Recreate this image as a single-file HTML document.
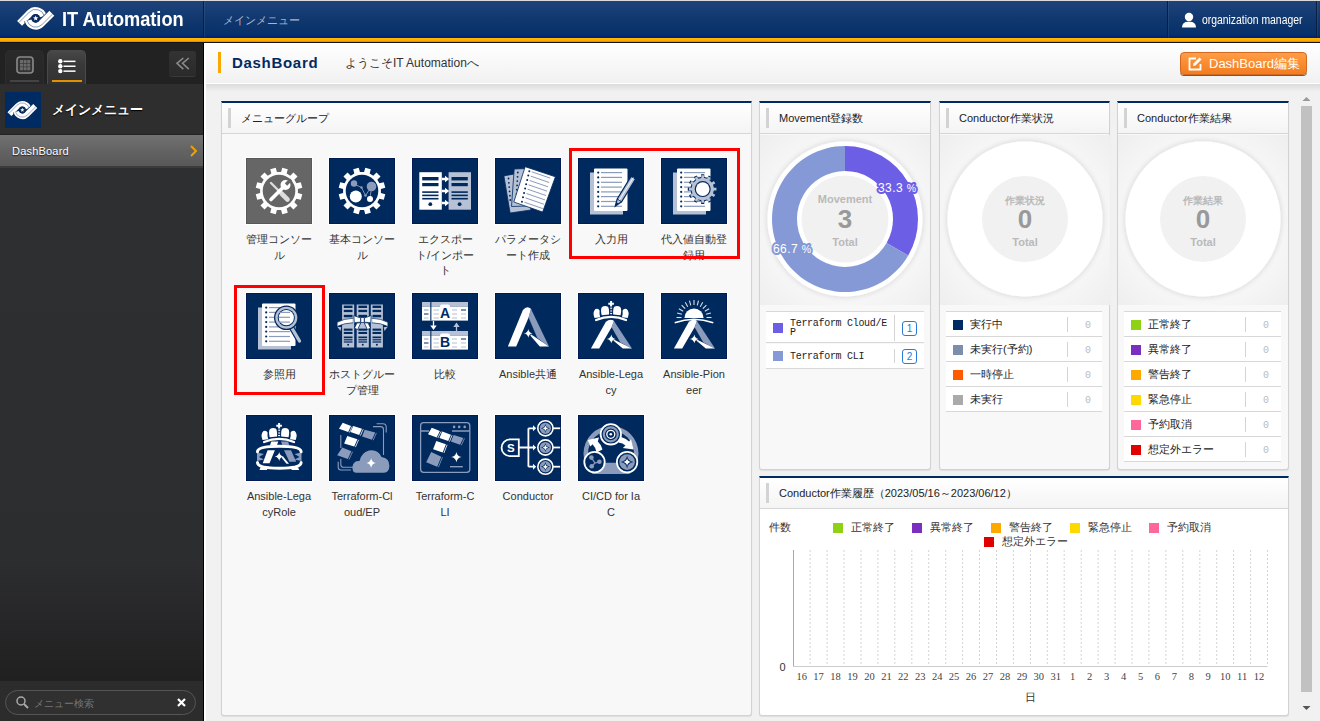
<!DOCTYPE html>
<html><head><meta charset="utf-8">
<style>
*{box-sizing:border-box;margin:0;padding:0}
html,body{width:1320px;height:721px;overflow:hidden;background:#f1f1f1;font-family:"Liberation Sans",sans-serif;color:#333}
svg{display:block}
/* header */
#hd{position:absolute;left:0;top:0;width:1320px;height:43px;background:#d9d9d9}
#hdb{position:absolute;left:0;top:1px;width:1320px;height:37px;background:linear-gradient(#1e437b,#12396f 45%,#06306a 92%,#00237a 97%,#001f72)}
#hdo{position:absolute;left:0;top:38px;width:1320px;height:4px;background:linear-gradient(#ffba00,#ffa900 60%,#d08a00)}
#hdk{position:absolute;left:0;top:42px;width:1320px;height:1px;background:#141414}
.vdiv{position:absolute;top:1px;height:37px;width:1px;background:#0a1e42;box-shadow:1px 0 0 rgba(255,255,255,.07)}
#logo{position:absolute;left:14px;top:2px}
#logo-t{position:absolute;left:62px;top:8px;font-size:20px;font-weight:bold;color:#fff;transform:scaleX(.91);transform-origin:left top;white-space:nowrap}
#crumb{position:absolute;left:223px;top:13px;font-size:11px;color:#a9b5cb}
#user{position:absolute;left:1202px;top:13px;font-size:12px;color:#fff;transform:scaleX(.865);transform-origin:left top;white-space:nowrap}
#uic{position:absolute;left:1181px;top:12px}
/* sidebar */
#sb{position:absolute;left:0;top:43px;width:203px;height:678px;background:linear-gradient(#222 0,#222 41px,#2e2f31 125px,#2c2d2f 520px,#202020 638px)}
#sbk{position:absolute;left:203px;top:43px;width:1px;height:678px;background:#000}
#sbw{position:absolute;left:204px;top:43px;width:2px;height:678px;background:#fff}
.tab{position:absolute;top:50px;height:34px;width:39px;border-radius:5px 5px 0 0;border:1px solid #2c2c2c;border-bottom:none}
#tab1{left:5px;background:linear-gradient(#2a2a2a,#262626)}
#tab2{left:47px;background:linear-gradient(#484848,#393939 40%,#323232);border-color:#4a4a4a}
#menuhd{position:absolute;left:0;top:84px;width:203px;height:50px;background:#2e2e2e}
#menuhd .lg{position:absolute;left:5px;top:8px;width:36px;height:36px;background:#002b62}
#menuhd .lg svg{position:absolute;left:0;top:5px}
#menuhd .t{position:absolute;left:52px;top:17px;font-size:13px;font-weight:bold;color:#fff;text-shadow:0 1px 1px #000;white-space:nowrap}
#sbline{position:absolute;left:0;top:134px;width:203px;height:1px;background:#232323}
#dash{position:absolute;left:0;top:135px;width:203px;height:31px;background:linear-gradient(#727272,#636363 50%,#585858)}
#dash2{position:absolute;left:0;top:166px;width:203px;height:2px;background:#3c3c3c}
#dash .t{position:absolute;left:12px;top:10px;font-size:11px;letter-spacing:.2px;color:#fff;text-shadow:0 1px 1px #222}
#srch{position:absolute;left:0;top:681px;width:203px;height:40px;background:#2c2c2c}
#srch .box{position:absolute;left:5px;top:9px;width:191px;height:25px;border:1px solid #555;border-radius:13px;background:#303030}
#srch .ph{position:absolute;left:28px;top:6px;font-size:10px;color:#777}
/* content title */
#ttl{position:absolute;left:206px;top:43px;width:1114px;height:41px;background:linear-gradient(#fff,#f1f1f1);border-bottom:1px solid #fff}
#ttlsh{position:absolute;left:206px;top:84px;width:1114px;height:8px;background:linear-gradient(rgba(0,0,0,.085),rgba(0,0,0,0))}
#ttl .bar{position:absolute;left:12px;top:9px;width:3px;height:21px;background:#f9a800}
#ttl .h{position:absolute;left:26px;top:11px;font-size:15px;font-weight:bold;color:#002b62;letter-spacing:.7px}
#ttl .s{position:absolute;left:139px;top:12px;font-size:12px;color:#333}
#edit{position:absolute;left:1180px;top:52px;width:127px;height:23px;border-radius:4px;background:linear-gradient(#ff9d48,#f98a2e 55%,#f27d20);border:1px solid #d06a22;box-shadow:0 1px 0 #9b4d18}
#edit .t{position:absolute;left:28px;top:2px;font-size:13px;color:#fff;white-space:nowrap}
#edit svg{position:absolute;left:6px;top:3px}
/* panels */
.pn{position:absolute;border:1px solid #d2d2d2;border-top:2px solid #002b62;border-radius:0 0 3px 3px;background:#f8f8f8;box-shadow:0 1px 1px rgba(0,0,0,.08)}
.pn .ph{position:absolute;left:0;top:0;right:0;height:31px;background:linear-gradient(#fff,#f4f4f4);border-bottom:1px solid #d6d6d6}
.pn .ph .bar{position:absolute;left:6px;top:5px;width:3px;height:20px;background:#d3d3d3}
.pn .ph .t{position:absolute;left:19px;top:8px;font-size:11px;color:#222;white-space:nowrap}
.mi{position:absolute;width:66px;height:66px;box-shadow:0 0 0 1px #fff}
.ml{position:absolute;left:-10px;top:74px;width:86px;text-align:center;font-size:11px;line-height:15.5px;color:#333;white-space:nowrap}
.red{position:absolute;border:3px solid #f00}
/* donut panels */
.ca{position:absolute;left:0;top:32px;width:170px;height:170px;background:radial-gradient(circle at 50% 50%,#f8f8f8 60%,#eeeeee 100%)}
.ct{position:absolute;text-align:center;width:100px;color:#b9b9b9;font-weight:bold;font-size:11px;white-space:nowrap}
.cn{position:absolute;text-align:center;width:100px;color:#999;font-weight:bold;font-size:26px}
.pct{position:absolute;font-size:12px;color:#fff;font-weight:normal;white-space:nowrap}
/* legend tables */
.lt{position:absolute;border-top:1px solid #d8d8d8}
.lr{position:relative;height:25px;background:#fff;border-bottom:1px solid #d8d8d8}
.sq{position:absolute;left:7px;top:8px;width:10px;height:10px}
.lx{position:absolute;left:24px;top:5px;font-size:11px;color:#222;white-space:nowrap}
.sep{position:absolute;left:121px;top:5px;width:1px;height:15px;background:#d4d4d4}
.zr{position:absolute;left:139px;top:8px;font-family:"Liberation Mono",monospace;font-size:10px;color:#bbb}
.mv{position:absolute;background:#fff;border-bottom:1px solid #d8d8d8}
.mvx{position:absolute;left:24px;font-family:"Liberation Mono",monospace;font-size:10px;line-height:9px;color:#222;letter-spacing:-.3px}
.bdg{position:absolute;left:136px;width:15px;height:15px;border:1px solid #2a7ad6;border-radius:3px;color:#2a7ad6;font-size:10px;text-align:center;line-height:13px}
/* scrollbar */
#scr{position:absolute;left:1299px;top:92px;width:15px;height:629px;background:#f1f1f1}
#thumb{position:absolute;left:1301px;top:106px;width:11px;height:586px;background:#c1c1c1}
.chlbl{font-family:"Liberation Serif",serif;font-size:10.5px;fill:#444}
</style></head><body>
<svg width="0" height="0" style="position:absolute"><defs><filter id="sh" x="-20%" y="-20%" width="140%" height="140%"><feGaussianBlur in="SourceAlpha" stdDeviation="3"/><feOffset dy="0"/><feComponentTransfer><feFuncA type="linear" slope=".16"/></feComponentTransfer><feMerge><feMergeNode/><feMergeNode in="SourceGraphic"/></feMerge></filter></defs></svg>
<div id="hd"></div><div id="hdb"></div><div id="hdo"></div><div id="hdk"></div>
<div class="vdiv" style="left:203px"></div>
<div class="vdiv" style="left:1167px"></div>
<div class="vdiv" style="left:1316px"></div>
<div id="logo"><svg width="44.0" height="34.0" viewBox="0 0 44 34">
<path d="M5.58,21.39 L16.18,10.78 A7.8,7.8 0 0 1 29.23,14.28" stroke="#fff" stroke-width="7" fill="none"/>
<path d="M4.80,20.61 L15.41,10.01 A8.9,8.9 0 0 1 30.30,14.00" stroke="#3a5688" stroke-width=".6" fill="none"/>
<path d="M37.82,11.21 L27.22,21.82 A7.8,7.8 0 0 1 14.17,18.32" stroke="#0c2a5e" stroke-width="8.4" fill="none"/>
<path d="M37.82,11.21 L27.22,21.82 A7.8,7.8 0 0 1 14.17,18.32" stroke="#fff" stroke-width="7" fill="none"/>
<path d="M38.60,11.99 L27.99,22.59 A8.9,8.9 0 0 1 13.10,18.60" stroke="#3a5688" stroke-width=".6" fill="none"/>
<circle cx="21.700000000000003" cy="16.3" r="4.3" fill="#0c2a5e"/>
<path d="M21.70,13.50 L22.38,15.37 L24.36,15.43 L22.79,16.66 L23.35,18.57 L21.70,17.45 L20.05,18.57 L20.61,16.66 L19.04,15.43 L21.02,15.37Z" fill="#fff"/>
</svg></div>
<div id="logo-t">IT Automation</div>
<div id="crumb">メインメニュー</div>
<div id="uic"><svg width="16" height="16" viewBox="0 0 16 16"><circle cx="8" cy="5" r="4.2" fill="#fff"/><path d="M1,15.5 Q1,9.5 8,9.8 Q15,9.5 15,15.5 Z" fill="#fff"/></svg></div>
<div id="user">organization manager</div>

<div id="sb"></div><div id="sbk"></div><div id="sbw"></div>
<div class="tab" id="tab1"><svg style="position:absolute;left:10px;top:5px" width="18" height="18" viewBox="0 0 18 18"><rect x="1" y="1" width="16" height="16" rx="3" stroke="#8a8a8a" stroke-width="1.6" fill="#333"/><g fill="#6a6a6a"><rect x="4" y="4" width="3" height="3"/><rect x="7.6" y="4" width="3" height="3"/><rect x="11.2" y="4" width="3" height="3"/><rect x="4" y="7.6" width="3" height="3"/><rect x="7.6" y="7.6" width="3" height="3"/><rect x="11.2" y="7.6" width="3" height="3"/><rect x="4" y="11.2" width="3" height="3"/><rect x="7.6" y="11.2" width="3" height="3"/><rect x="11.2" y="11.2" width="3" height="3"/></g></svg><div style="position:absolute;left:4px;top:29px;width:29px;height:2px;background:#444"></div></div>
<div class="tab" id="tab2"><svg style="position:absolute;left:9px;top:7px" width="20" height="16" viewBox="0 0 20 16"><g fill="#fff"><circle cx="3.3" cy="3.3" r="2.2"/><circle cx="3.3" cy="8.2" r="2.2"/><circle cx="3.3" cy="13.1" r="2.2"/><rect x="6.5" y="2.6" width="12" height="1.5"/><rect x="6.5" y="7.5" width="12" height="1.5"/><rect x="6.5" y="12.4" width="12" height="1.5"/></g></svg><div style="position:absolute;left:4px;top:29px;width:30px;height:2px;background:#e09000"></div></div>
<div style="position:absolute;left:169px;top:51px;width:27px;height:26px;border-radius:3px;background:linear-gradient(#333,#2a2a2a);border-bottom:1px solid #3a3a3a"><svg width="27" height="26" viewBox="0 0 27 26"><path d="M14.3,7 L8,12.3 L14.3,18.2 M19.8,7 L13.5,12.3 L19.8,18.2" stroke="#8a8a8a" stroke-width="1.6" fill="none"/></svg></div>
<div id="menuhd"><div class="lg"><svg width="35.2" height="27.2" viewBox="0 0 44 34">
<path d="M5.58,21.39 L16.18,10.78 A7.8,7.8 0 0 1 29.23,14.28" stroke="#fff" stroke-width="7" fill="none"/>
<path d="M4.80,20.61 L15.41,10.01 A8.9,8.9 0 0 1 30.30,14.00" stroke="#3a5688" stroke-width=".6" fill="none"/>
<path d="M37.82,11.21 L27.22,21.82 A7.8,7.8 0 0 1 14.17,18.32" stroke="#0c2a5e" stroke-width="8.4" fill="none"/>
<path d="M37.82,11.21 L27.22,21.82 A7.8,7.8 0 0 1 14.17,18.32" stroke="#fff" stroke-width="7" fill="none"/>
<path d="M38.60,11.99 L27.99,22.59 A8.9,8.9 0 0 1 13.10,18.60" stroke="#3a5688" stroke-width=".6" fill="none"/>
<circle cx="21.700000000000003" cy="16.3" r="4.3" fill="#0c2a5e"/>
<path d="M21.70,13.50 L22.38,15.37 L24.36,15.43 L22.79,16.66 L23.35,18.57 L21.70,17.45 L20.05,18.57 L20.61,16.66 L19.04,15.43 L21.02,15.37Z" fill="#fff"/>
</svg></div><div class="t">メインメニュー</div></div>
<div id="sbline"></div>
<div id="dash"><div class="t">DashBoard</div><svg style="position:absolute;left:189px;top:9px" width="10" height="14" viewBox="0 0 10 14"><path d="M2,2 L7,7 L2,12" stroke="#f0a000" stroke-width="2" fill="none"/></svg></div><div id="dash2"></div>
<div id="srch"><div class="box"><svg style="position:absolute;left:9px;top:4px" width="15" height="15" viewBox="0 0 15 15"><circle cx="6" cy="6" r="4" stroke="#aaa" stroke-width="1.5" fill="none"/><path d="M9,9 L13,13" stroke="#aaa" stroke-width="2"/></svg><div class="ph">メニュー検索</div><svg style="position:absolute;left:170px;top:6px" width="11" height="11" viewBox="0 0 11 11"><path d="M2,2 L9,9 M9,2 L2,9" stroke="#fff" stroke-width="2.2"/></svg></div></div>

<div id="ttl"><div class="bar"></div><div class="h">DashBoard</div><div class="s">ようこそIT Automationへ</div></div>
<div id="ttlsh"></div>
<div id="edit"><svg width="16" height="16" viewBox="0 0 16 16"><path d="M9,2.5 L2.5,2.5 L2.5,13.5 L13.5,13.5 L13.5,8" stroke="#fff" stroke-width="1.8" fill="none"/><path d="M6,10 L6.5,7.5 L12.5,1.5 L14.5,3.5 L8.5,9.5 Z" fill="#fff"/></svg><div class="t">DashBoard編集</div></div>

<div class="pn" style="left:221px;top:101px;width:531px;height:615px"><div class="ph"><div class="bar"></div><div class="t">メニューグループ</div></div></div>
<div class="mi" style="left:246px;top:158px"><svg width="66" height="66" viewBox="0 0 66 66"><rect width="66" height="66" fill="#666"/><path d="M51.89,35.07 L56.27,36.27 L54.79,41.80 L50.39,40.65 L48.32,44.23 L51.52,47.47 L47.47,51.52 L44.23,48.32 L40.65,50.39 L41.80,54.79 L36.27,56.27 L35.07,51.89 L30.93,51.89 L29.73,56.27 L24.20,54.79 L25.35,50.39 L21.77,48.32 L18.53,51.52 L14.48,47.47 L17.68,44.23 L15.61,40.65 L11.21,41.80 L9.73,36.27 L14.11,35.07 L14.11,30.93 L9.73,29.73 L11.21,24.20 L15.61,25.35 L17.68,21.77 L14.48,18.53 L18.53,14.48 L21.77,17.68 L25.35,15.61 L24.20,11.21 L29.73,9.73 L30.93,14.11 L35.07,14.11 L36.27,9.73 L41.80,11.21 L40.65,15.61 L44.23,17.68 L47.47,14.48 L51.52,18.53 L48.32,21.77 L50.39,25.35 L54.79,24.20 L56.27,29.73 L51.89,30.93Z" fill="#fff"/><circle cx="33" cy="33" r="16.3" fill="#666"/><path d="M25,25 L33,33" stroke="#ddd" stroke-width="2.4" stroke-linecap="round"/><path d="M35.5,35.5 L41.5,41.5" stroke="#ddd" stroke-width="4.6" stroke-linecap="round"/><path d="M25,41.5 L37,29.5" stroke="#fff" stroke-width="3.6" stroke-linecap="round"/><circle cx="39.5" cy="27" r="5" fill="#fff"/><path d="M40,26.5 L45,21.5" stroke="#666" stroke-width="3.2"/><rect x=".5" y=".5" width="65" height="65" fill="none" stroke="#555" stroke-width="1" opacity=".8"/></svg><div class="ml">管理コンソー<br>ル</div></div>
<div class="mi" style="left:329px;top:158px"><svg width="66" height="66" viewBox="0 0 66 66"><rect width="66" height="66" fill="#00295e"/><path d="M51.89,35.07 L56.27,36.27 L54.79,41.80 L50.39,40.65 L48.32,44.23 L51.52,47.47 L47.47,51.52 L44.23,48.32 L40.65,50.39 L41.80,54.79 L36.27,56.27 L35.07,51.89 L30.93,51.89 L29.73,56.27 L24.20,54.79 L25.35,50.39 L21.77,48.32 L18.53,51.52 L14.48,47.47 L17.68,44.23 L15.61,40.65 L11.21,41.80 L9.73,36.27 L14.11,35.07 L14.11,30.93 L9.73,29.73 L11.21,24.20 L15.61,25.35 L17.68,21.77 L14.48,18.53 L18.53,14.48 L21.77,17.68 L25.35,15.61 L24.20,11.21 L29.73,9.73 L30.93,14.11 L35.07,14.11 L36.27,9.73 L41.80,11.21 L40.65,15.61 L44.23,17.68 L47.47,14.48 L51.52,18.53 L48.32,21.77 L50.39,25.35 L54.79,24.20 L56.27,29.73 L51.89,30.93Z" fill="#fff"/><circle cx="33" cy="33" r="16.3" fill="#00295e"/><path d="M25,26 L32.5,29.5 L36.5,37.5 L42.5,28.5 L41,41" stroke="#8a9bbb" stroke-width=".9" fill="none"/><circle cx="25" cy="25.5" r="3.2" fill="#8a9bbb"/><circle cx="42.5" cy="28.5" r="4.8" fill="#8a9bbb"/><circle cx="32.5" cy="29.5" r="1.2" fill="#8a9bbb"/><circle cx="36.5" cy="37.5" r="1.3" fill="#8a9bbb"/><circle cx="26.8" cy="38.5" r="6" fill="#fff"/><circle cx="41" cy="41" r="3" fill="#fff"/><rect x=".5" y=".5" width="65" height="65" fill="none" stroke="#001650" stroke-width="1" opacity=".8"/></svg><div class="ml">基本コンソー<br>ル</div></div>
<div class="mi" style="left:412px;top:158px"><svg width="66" height="66" viewBox="0 0 66 66"><rect width="66" height="66" fill="#00295e"/><rect x="7.3" y="14.2" width="22.5" height="37.5" fill="#fff"/><rect x="36.6" y="14.2" width="22.4" height="37.5" fill="#b6c1d5"/><rect x="10.2" y="19" width="16.3" height="3.4" fill="#00295e"/><rect x="10.2" y="25" width="16.3" height="3.2" fill="#00295e"/><rect x="10.2" y="33.3" width="16.3" height="1.6" fill="#00295e"/><rect x="10.2" y="36.6" width="16.3" height="1.6" fill="#00295e"/><rect x="10.2" y="39.9" width="16.3" height="1.6" fill="#00295e"/><circle cx="18.299999999999997" cy="46.2" r="1.9" fill="#00295e"/><rect x="39.5" y="19" width="16.3" height="3.4" fill="#00295e"/><rect x="39.5" y="25" width="16.3" height="3.2" fill="#00295e"/><rect x="39.5" y="33.3" width="16.3" height="1.6" fill="#00295e"/><rect x="39.5" y="36.6" width="16.3" height="1.6" fill="#00295e"/><rect x="39.5" y="39.9" width="16.3" height="1.6" fill="#00295e"/><circle cx="47.6" cy="46.2" r="1.9" fill="#00295e"/><path d="M29.8,19.8 L33,19.8 L33,17.8 L37.2,21 L33,24.2 L33,22.2 L29.8,22.2Z" fill="#fff"/><path d="M29.8,31.8 L33,31.8 L33,29.8 L37.2,33 L33,36.2 L33,34.2 L29.8,34.2Z" fill="#fff"/><path d="M29.8,43.8 L33,43.8 L33,41.8 L37.2,45 L33,48.2 L33,46.2 L29.8,46.2Z" fill="#fff"/><rect x=".5" y=".5" width="65" height="65" fill="none" stroke="#001650" stroke-width="1" opacity=".8"/></svg><div class="ml">エクスポー<br>ト/インポー<br>ト</div></div>
<div class="mi" style="left:495px;top:158px"><svg width="66" height="66" viewBox="0 0 66 66"><rect width="66" height="66" fill="#00295e"/><path d="M8.9,17.9 L30,14 L36,52 L15.1,55 Z" fill="#b6c1d5" stroke="#00295e" stroke-width=".8"/><path d="M19.2,11 L34,10.5 L32,48 L16.5,48.5 Z" fill="#b6c1d5" stroke="#00295e" stroke-width=".8"/><circle cx="13.5" cy="20.5" r=".9" fill="#00295e"/><circle cx="22.8" cy="14.5" r=".9" fill="#00295e"/><circle cx="13.85" cy="24.8" r=".9" fill="#00295e"/><circle cx="22.55" cy="18.8" r=".9" fill="#00295e"/><circle cx="14.2" cy="29.1" r=".9" fill="#00295e"/><circle cx="22.3" cy="23.1" r=".9" fill="#00295e"/><circle cx="14.55" cy="33.4" r=".9" fill="#00295e"/><circle cx="22.05" cy="27.4" r=".9" fill="#00295e"/><circle cx="14.9" cy="37.7" r=".9" fill="#00295e"/><circle cx="21.8" cy="31.7" r=".9" fill="#00295e"/><circle cx="15.25" cy="42.0" r=".9" fill="#00295e"/><circle cx="21.55" cy="36.0" r=".9" fill="#00295e"/><path d="M30.2,8.7 L60.4,18.8 L47.6,54 L18.8,44 Z" fill="#fff" stroke="#00295e" stroke-width=".8"/><circle cx="34.30" cy="13.20" r="1" fill="#00295e"/><path d="M36.80,13.80 L55.24,20.15" stroke="#8a9bbb" stroke-width="1"/><circle cx="33.25" cy="17.55" r="1" fill="#00295e"/><path d="M35.75,18.15 L54.19,24.50" stroke="#8a9bbb" stroke-width="1"/><circle cx="32.20" cy="21.90" r="1" fill="#00295e"/><path d="M34.70,22.50 L53.14,28.85" stroke="#8a9bbb" stroke-width="1"/><circle cx="31.15" cy="26.25" r="1" fill="#00295e"/><path d="M33.65,26.85 L52.09,33.20" stroke="#8a9bbb" stroke-width="1"/><circle cx="30.10" cy="30.60" r="1" fill="#00295e"/><path d="M32.60,31.20 L51.04,37.55" stroke="#8a9bbb" stroke-width="1"/><circle cx="29.05" cy="34.95" r="1" fill="#00295e"/><path d="M31.55,35.55 L49.99,41.90" stroke="#8a9bbb" stroke-width="1"/><circle cx="28.00" cy="39.30" r="1" fill="#00295e"/><path d="M30.50,39.90 L48.94,46.25" stroke="#8a9bbb" stroke-width="1"/><circle cx="26.95" cy="43.65" r="1" fill="#00295e"/><path d="M29.45,44.25 L47.89,50.60" stroke="#8a9bbb" stroke-width="1"/><rect x=".5" y=".5" width="65" height="65" fill="none" stroke="#001650" stroke-width="1" opacity=".8"/></svg><div class="ml">パラメータシ<br>ート作成</div></div>
<div class="mi" style="left:578px;top:158px"><svg width="66" height="66" viewBox="0 0 66 66"><rect width="66" height="66" fill="#00295e"/><rect x="12" y="14.5" width="33" height="42" fill="#b6c1d5"/><rect x="16" y="10.5" width="33.5" height="42.5" rx="1" fill="#fff"/><circle cx="20.2" cy="14.6" r="1.1" fill="#00295e"/><rect x="23" y="14.0" width="21" height="1.2" fill="#8a9bbb"/><circle cx="20.2" cy="19.4" r="1.1" fill="#00295e"/><rect x="23" y="18.799999999999997" width="21" height="1.2" fill="#8a9bbb"/><circle cx="20.2" cy="24.3" r="1.1" fill="#00295e"/><rect x="23" y="23.7" width="21" height="1.2" fill="#8a9bbb"/><circle cx="20.2" cy="29.1" r="1.1" fill="#00295e"/><rect x="23" y="28.5" width="21" height="1.2" fill="#8a9bbb"/><circle cx="20.2" cy="33.9" r="1.1" fill="#00295e"/><rect x="23" y="33.3" width="21" height="1.2" fill="#8a9bbb"/><circle cx="20.2" cy="38.6" r="1.1" fill="#00295e"/><rect x="23" y="38.0" width="21" height="1.2" fill="#8a9bbb"/><circle cx="20.2" cy="43.5" r="1.1" fill="#00295e"/><rect x="23" y="42.9" width="21" height="1.2" fill="#8a9bbb"/><circle cx="20.2" cy="48.3" r="1.1" fill="#00295e"/><rect x="23" y="47.699999999999996" width="21" height="1.2" fill="#8a9bbb"/><path d="M37.3,48 L39.2,41 L53.2,18.2 L57.6,21 L43.6,43.8 Z" fill="#b6c1d5" stroke="#00295e" stroke-width="1.2"/><path d="M39.2,41 L43.6,43.8" stroke="#00295e" stroke-width="1"/><path d="M37.3,48 L38.3,44.2 L40.6,45.6Z" fill="#00295e"/><path d="M41.2,42.3 L55.4,19.6" stroke="#fff" stroke-width=".9"/><rect x=".5" y=".5" width="65" height="65" fill="none" stroke="#001650" stroke-width="1" opacity=".8"/></svg><div class="ml">入力用</div></div>
<div class="mi" style="left:661px;top:158px"><svg width="66" height="66" viewBox="0 0 66 66"><rect width="66" height="66" fill="#00295e"/><rect x="12" y="14.5" width="33" height="42" fill="#b6c1d5"/><rect x="16" y="10.5" width="33.5" height="42.5" rx="1" fill="#fff"/><circle cx="20.2" cy="14.6" r="1.1" fill="#00295e"/><rect x="23" y="14.0" width="21" height="1.2" fill="#8a9bbb"/><circle cx="20.2" cy="19.4" r="1.1" fill="#00295e"/><rect x="23" y="18.799999999999997" width="21" height="1.2" fill="#8a9bbb"/><circle cx="20.2" cy="24.3" r="1.1" fill="#00295e"/><rect x="23" y="23.7" width="21" height="1.2" fill="#8a9bbb"/><circle cx="20.2" cy="29.1" r="1.1" fill="#00295e"/><rect x="23" y="28.5" width="21" height="1.2" fill="#8a9bbb"/><circle cx="20.2" cy="33.9" r="1.1" fill="#00295e"/><rect x="23" y="33.3" width="21" height="1.2" fill="#8a9bbb"/><circle cx="20.2" cy="38.6" r="1.1" fill="#00295e"/><rect x="23" y="38.0" width="21" height="1.2" fill="#8a9bbb"/><circle cx="20.2" cy="43.5" r="1.1" fill="#00295e"/><rect x="23" y="42.9" width="21" height="1.2" fill="#8a9bbb"/><circle cx="20.2" cy="48.3" r="1.1" fill="#00295e"/><rect x="23" y="47.699999999999996" width="21" height="1.2" fill="#8a9bbb"/><path d="M53.80,29.51 L56.62,29.53 L56.62,32.67 L53.80,32.69 L52.97,35.77 L55.40,37.20 L53.84,39.92 L51.38,38.53 L49.13,40.78 L50.52,43.24 L47.80,44.80 L46.37,42.37 L43.29,43.20 L43.27,46.02 L40.13,46.02 L40.11,43.20 L37.03,42.37 L35.60,44.80 L32.88,43.24 L34.27,40.78 L32.02,38.53 L29.56,39.92 L28.00,37.20 L30.43,35.77 L29.60,32.69 L26.78,32.67 L26.78,29.53 L29.60,29.51 L30.43,26.43 L28.00,25.00 L29.56,22.28 L32.02,23.67 L34.27,21.42 L32.88,18.96 L35.60,17.40 L37.03,19.83 L40.11,19.00 L40.13,16.18 L43.27,16.18 L43.29,19.00 L46.37,19.83 L47.80,17.40 L50.52,18.96 L49.13,21.42 L51.38,23.67 L53.84,22.28 L55.40,25.00 L52.97,26.43Z" fill="#00295e"/><path d="M52.82,29.76 L55.44,29.78 L55.44,32.42 L52.82,32.44 L52.00,35.50 L54.26,36.82 L52.93,39.11 L50.66,37.82 L48.42,40.06 L49.71,42.33 L47.42,43.66 L46.10,41.40 L43.04,42.22 L43.02,44.84 L40.38,44.84 L40.36,42.22 L37.30,41.40 L35.98,43.66 L33.69,42.33 L34.98,40.06 L32.74,37.82 L30.47,39.11 L29.14,36.82 L31.40,35.50 L30.58,32.44 L27.96,32.42 L27.96,29.78 L30.58,29.76 L31.40,26.70 L29.14,25.38 L30.47,23.09 L32.74,24.38 L34.98,22.14 L33.69,19.87 L35.98,18.54 L37.30,20.80 L40.36,19.98 L40.38,17.36 L43.02,17.36 L43.04,19.98 L46.10,20.80 L47.42,18.54 L49.71,19.87 L48.42,22.14 L50.66,24.38 L52.93,23.09 L54.26,25.38 L52.00,26.70Z" fill="#b6c1d5"/><circle cx="41.7" cy="31.1" r="8" fill="#00295e"/><circle cx="41.7" cy="31.1" r="6.8" fill="#fff"/><rect x=".5" y=".5" width="65" height="65" fill="none" stroke="#001650" stroke-width="1" opacity=".8"/></svg><div class="ml">代入値自動登<br>録用</div></div>
<div class="mi" style="left:246px;top:293px"><svg width="66" height="66" viewBox="0 0 66 66"><rect width="66" height="66" fill="#00295e"/><rect x="12" y="14.5" width="33" height="42" fill="#b6c1d5"/><rect x="16" y="10.5" width="33.5" height="42.5" rx="1" fill="#fff"/><circle cx="20.2" cy="14.6" r="1.1" fill="#00295e"/><rect x="23" y="14.0" width="21" height="1.2" fill="#8a9bbb"/><circle cx="20.2" cy="19.4" r="1.1" fill="#00295e"/><rect x="23" y="18.799999999999997" width="21" height="1.2" fill="#8a9bbb"/><circle cx="20.2" cy="24.3" r="1.1" fill="#00295e"/><rect x="23" y="23.7" width="21" height="1.2" fill="#8a9bbb"/><circle cx="20.2" cy="29.1" r="1.1" fill="#00295e"/><rect x="23" y="28.5" width="21" height="1.2" fill="#8a9bbb"/><circle cx="20.2" cy="33.9" r="1.1" fill="#00295e"/><rect x="23" y="33.3" width="21" height="1.2" fill="#8a9bbb"/><circle cx="20.2" cy="38.6" r="1.1" fill="#00295e"/><rect x="23" y="38.0" width="21" height="1.2" fill="#8a9bbb"/><circle cx="20.2" cy="43.5" r="1.1" fill="#00295e"/><rect x="23" y="42.9" width="21" height="1.2" fill="#8a9bbb"/><circle cx="20.2" cy="48.3" r="1.1" fill="#00295e"/><rect x="23" y="47.699999999999996" width="21" height="1.2" fill="#8a9bbb"/><path d="M45,33.5 L53.5,48" stroke="#00295e" stroke-width="5.5" stroke-linecap="round"/><path d="M45,33.5 L53.5,48" stroke="#b6c1d5" stroke-width="3.3" stroke-linecap="round"/><circle cx="40.3" cy="24.7" r="12.3" fill="#00295e"/><circle cx="40.3" cy="24.7" r="11" fill="#b6c1d5"/><circle cx="40.3" cy="24.7" r="8.6" fill="#00295e"/><circle cx="40.3" cy="24.7" r="7.6" fill="#fff"/><rect x="33" y="18.799999999999997" width="11" height="1.2" fill="#8a9bbb"/><rect x="33" y="23.7" width="11" height="1.2" fill="#8a9bbb"/><rect x="33" y="28.5" width="11" height="1.2" fill="#8a9bbb"/><rect x=".5" y=".5" width="65" height="65" fill="none" stroke="#001650" stroke-width="1" opacity=".8"/></svg><div class="ml">参照用</div></div>
<div class="mi" style="left:329px;top:293px"><svg width="66" height="66" viewBox="0 0 66 66"><rect width="66" height="66" fill="#00295e"/><rect x="13.1" y="11.5" width="12.1" height="43" fill="#b6c1d5"/><rect x="14.799999999999999" y="12.6" width="8.7" height="2.4" fill="#00295e"/><rect x="14.799999999999999" y="16.8" width="8.7" height="2.3" fill="#00295e"/><rect x="14.799999999999999" y="21.8" width="8.7" height="2.5" fill="#00295e"/><rect x="14.799999999999999" y="35.6" width="8.7" height="2.1" fill="#00295e"/><rect x="14.799999999999999" y="38.9" width="8.7" height="2.1" fill="#00295e"/><rect x="14.799999999999999" y="43.5" width="8.7" height="1.7" fill="#00295e"/><rect x="14.799999999999999" y="46.2" width="8.7" height="1.2" fill="#00295e"/><rect x="14.799999999999999" y="48.4" width="8.7" height="1.2" fill="#00295e"/><circle cx="19.15" cy="51.8" r="1" fill="#00295e"/><rect x="27.7" y="11.5" width="12.1" height="43" fill="#b6c1d5"/><rect x="29.4" y="12.6" width="8.7" height="2.4" fill="#00295e"/><rect x="29.4" y="16.8" width="8.7" height="2.3" fill="#00295e"/><rect x="29.4" y="21.8" width="8.7" height="2.5" fill="#00295e"/><rect x="29.4" y="35.6" width="8.7" height="2.1" fill="#00295e"/><rect x="29.4" y="38.9" width="8.7" height="2.1" fill="#00295e"/><rect x="29.4" y="43.5" width="8.7" height="1.7" fill="#00295e"/><rect x="29.4" y="46.2" width="8.7" height="1.2" fill="#00295e"/><rect x="29.4" y="48.4" width="8.7" height="1.2" fill="#00295e"/><circle cx="33.75" cy="51.8" r="1" fill="#00295e"/><rect x="41.8" y="11.5" width="12.1" height="43" fill="#b6c1d5"/><rect x="43.5" y="12.6" width="8.7" height="2.4" fill="#00295e"/><rect x="43.5" y="16.8" width="8.7" height="2.3" fill="#00295e"/><rect x="43.5" y="21.8" width="8.7" height="2.5" fill="#00295e"/><rect x="43.5" y="35.6" width="8.7" height="2.1" fill="#00295e"/><rect x="43.5" y="38.9" width="8.7" height="2.1" fill="#00295e"/><rect x="43.5" y="43.5" width="8.7" height="1.7" fill="#00295e"/><rect x="43.5" y="46.2" width="8.7" height="1.2" fill="#00295e"/><rect x="43.5" y="48.4" width="8.7" height="1.2" fill="#00295e"/><circle cx="47.849999999999994" cy="51.8" r="1" fill="#00295e"/><path d="M8.1,29.3 Q15,25.5 24.3,25.2 L24.3,29.75 Q15,30 8.1,33.5 Z M58.9,29.3 Q52,25.5 42.7,25.2 L42.7,29.75 Q52,30 58.9,33.5 Z" fill="#fff" stroke="#00295e" stroke-width=".7"/><path d="M8.3,33.8 L12.3,34.3 L11.5,38 Z M58.7,33.8 L54.7,34.3 L55.5,38 Z" fill="#b6c1d5"/><path d="M24.3,25.2 L42.7,25.2 L42.7,29.75 L24.3,29.75Z" fill="#fff"/><path d="M24.8,22.6 L31.7,25 L31.7,29.2 L25.3,29.6 Z M42.2,22.6 L35.3,25 L35.3,29.2 L41.7,29.6 Z" fill="#fff" stroke="#00295e" stroke-width=".8" stroke-linejoin="round"/><path d="M28,29.9 L31.8,29.9 L28.6,36.6 L25.4,35.2 Z M39,29.9 L35.2,29.9 L38.4,36.6 L41.6,35.2 Z" fill="#fff" stroke="#00295e" stroke-width=".8" stroke-linejoin="round"/><rect x="31.8" y="24.6" width="3.4" height="4.8" fill="#fff" stroke="#00295e" stroke-width=".8"/><rect x=".5" y=".5" width="65" height="65" fill="none" stroke="#001650" stroke-width="1" opacity=".8"/></svg><div class="ml">ホストグルー<br>プ管理</div></div>
<div class="mi" style="left:412px;top:293px"><svg width="66" height="66" viewBox="0 0 66 66"><rect width="66" height="66" fill="#00295e"/><rect x="10" y="9" width="46" height="4.6" fill="#b6c1d5"/><rect x="10" y="13.6" width="46" height="14" fill="#fff"/><rect x="18.3" y="9" width="1.1" height="18.6" fill="#00295e"/><rect x="12" y="16.5" width="4.5" height="1" fill="#8a9bbb"/><rect x="21.5" y="16.5" width="5.5" height="1" fill="#b6c1d5"/><rect x="40" y="16.5" width="5" height="1" fill="#b6c1d5"/><rect x="49" y="16.5" width="5" height="1" fill="#00295e"/><rect x="12" y="20.5" width="4.5" height="1" fill="#00295e"/><rect x="21.5" y="20.5" width="5.5" height="1" fill="#b6c1d5"/><rect x="40" y="20.5" width="5" height="1" fill="#b6c1d5"/><rect x="49" y="20.5" width="5" height="1" fill="#b6c1d5"/><rect x="12" y="24.5" width="4.5" height="1" fill="#b6c1d5"/><rect x="21.5" y="24.5" width="5.5" height="1" fill="#b6c1d5"/><rect x="40" y="24.5" width="5" height="1" fill="#b6c1d5"/><rect x="49" y="24.5" width="5" height="1" fill="#b6c1d5"/><rect x="28" y="11.5" width="10" height="15" rx="2" fill="#fff"/><text x="33" y="24.5" text-anchor="middle" font-family="Liberation Sans" font-weight="bold" font-size="14" fill="#00295e">A</text><rect x="10" y="38" width="46" height="4.6" fill="#b6c1d5"/><rect x="10" y="42.6" width="46" height="14" fill="#fff"/><rect x="18.3" y="38" width="1.1" height="18.6" fill="#00295e"/><rect x="12" y="45.5" width="4.5" height="1" fill="#8a9bbb"/><rect x="21.5" y="45.5" width="5.5" height="1" fill="#b6c1d5"/><rect x="40" y="45.5" width="5" height="1" fill="#b6c1d5"/><rect x="49" y="45.5" width="5" height="1" fill="#00295e"/><rect x="12" y="49.5" width="4.5" height="1" fill="#00295e"/><rect x="21.5" y="49.5" width="5.5" height="1" fill="#b6c1d5"/><rect x="40" y="49.5" width="5" height="1" fill="#b6c1d5"/><rect x="49" y="49.5" width="5" height="1" fill="#b6c1d5"/><rect x="12" y="53.5" width="4.5" height="1" fill="#b6c1d5"/><rect x="21.5" y="53.5" width="5.5" height="1" fill="#b6c1d5"/><rect x="40" y="53.5" width="5" height="1" fill="#b6c1d5"/><rect x="49" y="53.5" width="5" height="1" fill="#b6c1d5"/><rect x="28" y="40.5" width="10" height="15" rx="2" fill="#fff"/><text x="33" y="53.5" text-anchor="middle" font-family="Liberation Sans" font-weight="bold" font-size="14" fill="#00295e">B</text><path d="M21.5,28 L21.5,33.5" stroke="#fff" stroke-width="1.3"/><path d="M18.3,32.5 L24.7,32.5 L21.5,37Z" fill="#fff"/><path d="M44.5,38 L44.5,33" stroke="#b6c1d5" stroke-width="1.3"/><path d="M41.3,34 L47.7,34 L44.5,29.5Z" fill="#b6c1d5"/><rect x=".5" y=".5" width="65" height="65" fill="none" stroke="#001650" stroke-width="1" opacity=".8"/></svg><div class="ml">比較</div></div>
<div class="mi" style="left:495px;top:293px"><svg width="66" height="66" viewBox="0 0 66 66"><rect width="66" height="66" fill="#00295e"/><g transform="translate(0,0.000) scale(1,1.0000)"><path d="M12.9,53.4 L21.2,53.4 L33.6,24.4 L36.2,16 Q32,12.2 27.9,17 Z" fill="#fff"/><path d="M33.6,24.4 L35.8,15.6 L54,53.4 L49,50 L42.2,44.8 Z" fill="#8a9bbb"/><path d="M36.2,41.4 L54,53.4 L44.8,53.4 L35.3,42.6 Z" fill="#fff"/></g><path d="M33.3,35.9 Q33.916,39.684 37.699999999999996,40.3 Q33.916,40.916 33.3,44.699999999999996 Q32.684,40.916 28.9,40.3 Q32.684,39.684 33.3,35.9Z" fill="#fff"/><rect x=".5" y=".5" width="65" height="65" fill="none" stroke="#001650" stroke-width="1" opacity=".8"/></svg><div class="ml">Ansible共通</div></div>
<div class="mi" style="left:578px;top:293px"><svg width="66" height="66" viewBox="0 0 66 66"><rect width="66" height="66" fill="#00295e"/><path d="M16.5,25 Q14.2,19 17.5,16 Q20.5,15 21.6,17.5 Q21.2,21 22.2,24.2 Z" fill="#fff"/><path d="M49.7,25 Q52,19 48.7,16 Q45.7,15 44.6,17.5 Q45,21 44,24.2 Z" fill="#fff"/><path d="M23.6,22.2 Q22.3,16 24,14 Q27,12.2 30,13.8 Q31.2,15 31.1,21.6 Z" fill="#fff"/><path d="M42.6,22.2 Q43.9,16 42.2,14 Q39.2,12.2 36.2,13.8 Q35,15 35.1,21.6 Z" fill="#fff"/><rect x="32.2" y="14.6" width="1.9" height="1.2" fill="#fff"/><rect x="32.2" y="16.8" width="1.9" height="2.2" fill="#8a9bbb"/><rect x="32.2" y="19.9" width="1.9" height="1.2" fill="#fff"/><path d="M33.1,8 L33.1,13.5 M30.3,10.7 L35.9,10.7" stroke="#fff" stroke-width="2"/><path d="M18.1,27 Q33.1,20.8 48,27" stroke="#fff" stroke-width="2.3" fill="none" stroke-linecap="round"/><g transform="translate(0,16.112) scale(1,0.7395)"><path d="M12.9,53.4 L21.2,53.4 L33.6,24.4 L36.2,16 Q32,12.2 27.9,17 Z" fill="#fff"/><path d="M33.6,24.4 L35.8,15.6 L54,53.4 L49,50 L42.2,44.8 Z" fill="#8a9bbb"/><path d="M36.2,41.4 L54,53.4 L44.8,53.4 L35.3,42.6 Z" fill="#fff"/></g><path d="M33.3,41.51289473684211 Q33.916,45.296894736842106 37.699999999999996,45.912894736842105 Q33.916,46.528894736842105 33.3,50.312894736842104 Q32.684,46.528894736842105 28.9,45.912894736842105 Q32.684,45.296894736842106 33.3,41.51289473684211Z" fill="#fff"/><rect x=".5" y=".5" width="65" height="65" fill="none" stroke="#001650" stroke-width="1" opacity=".8"/></svg><div class="ml">Ansible-Lega<br>cy</div></div>
<div class="mi" style="left:661px;top:293px"><svg width="66" height="66" viewBox="0 0 66 66"><rect width="66" height="66" fill="#00295e"/><path d="M20.50,24.50 L15.50,24.50" stroke="#fff" stroke-width="1.1" opacity=".85"/><path d="M20.93,21.26 L16.10,19.97" stroke="#fff" stroke-width="1.1" opacity=".85"/><path d="M22.17,18.25 L17.84,15.75" stroke="#fff" stroke-width="1.1" opacity=".85"/><path d="M24.16,15.66 L20.63,12.13" stroke="#fff" stroke-width="1.1" opacity=".85"/><path d="M26.75,13.67 L24.25,9.34" stroke="#fff" stroke-width="1.1" opacity=".85"/><path d="M29.76,12.43 L28.47,7.60" stroke="#fff" stroke-width="1.1" opacity=".85"/><path d="M33.00,12.00 L33.00,7.00" stroke="#fff" stroke-width="1.1" opacity=".85"/><path d="M36.24,12.43 L37.53,7.60" stroke="#fff" stroke-width="1.1" opacity=".85"/><path d="M39.25,13.67 L41.75,9.34" stroke="#fff" stroke-width="1.1" opacity=".85"/><path d="M41.84,15.66 L45.37,12.13" stroke="#fff" stroke-width="1.1" opacity=".85"/><path d="M43.83,18.25 L48.16,15.75" stroke="#fff" stroke-width="1.1" opacity=".85"/><path d="M45.07,21.26 L49.90,19.97" stroke="#fff" stroke-width="1.1" opacity=".85"/><path d="M45.50,24.50 L50.50,24.50" stroke="#fff" stroke-width="1.1" opacity=".85"/><path d="M23.4,25 A9.6,9.6 0 0 1 42.6,25 Z" fill="#fff"/><path d="M13.7,29.8 Q33,22.5 52.3,29.8" stroke="#fff" stroke-width="1.5" fill="none"/><g transform="translate(0,16.112) scale(1,0.7395)"><path d="M12.9,53.4 L21.2,53.4 L33.6,24.4 L36.2,16 Q32,12.2 27.9,17 Z" fill="#fff"/><path d="M33.6,24.4 L35.8,15.6 L54,53.4 L49,50 L42.2,44.8 Z" fill="#8a9bbb"/><path d="M36.2,41.4 L54,53.4 L44.8,53.4 L35.3,42.6 Z" fill="#fff"/></g><path d="M33.3,41.51289473684211 Q33.916,45.296894736842106 37.699999999999996,45.912894736842105 Q33.916,46.528894736842105 33.3,50.312894736842104 Q32.684,46.528894736842105 28.9,45.912894736842105 Q32.684,45.296894736842106 33.3,41.51289473684211Z" fill="#fff"/><rect x=".5" y=".5" width="65" height="65" fill="none" stroke="#001650" stroke-width="1" opacity=".8"/></svg><div class="ml">Ansible-Pion<br>eer</div></div>
<div class="mi" style="left:246px;top:415px"><svg width="66" height="66" viewBox="0 0 66 66"><rect width="66" height="66" fill="#00295e"/><path d="M16.5,25 Q14.2,19 17.5,16 Q20.5,15 21.6,17.5 Q21.2,21 22.2,24.2 Z" fill="#fff"/><path d="M49.7,25 Q52,19 48.7,16 Q45.7,15 44.6,17.5 Q45,21 44,24.2 Z" fill="#fff"/><path d="M23.6,22.2 Q22.3,16 24,14 Q27,12.2 30,13.8 Q31.2,15 31.1,21.6 Z" fill="#fff"/><path d="M42.6,22.2 Q43.9,16 42.2,14 Q39.2,12.2 36.2,13.8 Q35,15 35.1,21.6 Z" fill="#fff"/><rect x="32.2" y="14.6" width="1.9" height="1.2" fill="#fff"/><rect x="32.2" y="16.8" width="1.9" height="2.2" fill="#8a9bbb"/><rect x="32.2" y="19.9" width="1.9" height="1.2" fill="#fff"/><path d="M33.1,8 L33.1,13.5 M30.3,10.7 L35.9,10.7" stroke="#fff" stroke-width="2"/><path d="M18.1,27 Q33.1,20.8 48,27" stroke="#fff" stroke-width="2.3" fill="none" stroke-linecap="round"/><path d="M24,30.3 L25.3,26.5 L32.3,26.5 L31,30.3Z" fill="#fff"/><path d="M35,26.5 L42,26.5 L43.3,30.3 L36.3,30.3Z" fill="#8a9bbb"/><path d="M11,37.5 L18,39 L13,42 L18,44.5 L11,46 Z" fill="#8a9bbb"/><path d="M55.5,37.5 L48.5,39 L53.5,42 L48.5,44.5 L55.5,46 Z" fill="#8a9bbb"/><path d="M16.7,48.3 L23.5,48.3 L28.9,35.2 L21.6,35.2Z" fill="#fff"/><path d="M38,35.2 L45,35.2 L50.2,46.8 L43.4,46.8Z" fill="#8a9bbb"/><path d="M35.5,42.5 L37,41.5 L43,48.8 L40.5,48.8Z" fill="#fff"/><path d="M33.2,37.1 Q33.86,40.84 37.6,41.5 Q33.86,42.16 33.2,45.9 Q32.540000000000006,42.16 28.800000000000004,41.5 Q32.540000000000006,40.84 33.2,37.1Z" fill="#fff"/><path d="M11.5,36.8 Q11.5,31.3 33.3,31.3 Q55.1,31.3 55.1,36.8" stroke="#fff" stroke-width="3" fill="none" stroke-linecap="round"/><path d="M11.5,47.5 Q11.5,53.2 33.3,53.2 Q55.1,53.2 55.1,47.5" stroke="#fff" stroke-width="3" fill="none" stroke-linecap="round"/><path d="M13.5,55.1 L14.5,52.2 L21.1,52.2 L21.1,55.1Z M53.1,55.1 L52.1,52.2 L45.5,52.2 L45.5,55.1Z" fill="#fff"/><rect x=".5" y=".5" width="65" height="65" fill="none" stroke="#001650" stroke-width="1" opacity=".8"/></svg><div class="ml">Ansible-Lega<br>cyRole</div></div>
<div class="mi" style="left:329px;top:415px"><svg width="66" height="66" viewBox="0 0 66 66"><rect width="66" height="66" fill="#00295e"/><path d="M47.6,8.7 L54,8.7 Q57.2,8.7 57.2,12 L57.2,17.4" stroke="#8a9bbb" stroke-width="1.1" fill="none"/><path d="M44,11.6 L51.5,11.6 Q54.5,11.6 54.5,14.5 L54.5,40" stroke="#8a9bbb" stroke-width="1.1" fill="none"/><path d="M9.2,46.7 L9.2,52 Q9.2,55 12,55 L22,55" stroke="#8a9bbb" stroke-width="1.1" fill="none"/><path d="M11.8,20 L11.8,33 M11.8,44 L11.8,49.5 Q11.8,52.3 14.5,52.3 L24,52.3" stroke="#8a9bbb" stroke-width="1.1" fill="none"/><path d="M13.7,7.8 L22.0,11.0 L19.2,17.0 L10.0,13.7Z" fill="#fff"/><path d="M23.2,11.5 L20.4,17.5" stroke="#fff" stroke-width="1" opacity=".8"/><path d="M24.3,11.0 L33.0,13.7 L30.2,20.1 L21.5,17.0Z" fill="#fff"/><path d="M34.2,14.2 L31.4,20.6" stroke="#fff" stroke-width="1" opacity=".8"/><path d="M35.7,14.7 L46.2,17.4 L43.0,24.7 L33.0,21.5Z" fill="#8a9bbb"/><path d="M47.400000000000006,17.9 L44.2,25.2" stroke="#8a9bbb" stroke-width="1" opacity=".8"/><path d="M18.3,21.0 L28.4,24.3 L25.2,31.6 L15.1,28.4Z" fill="#fff"/><path d="M29.599999999999998,24.8 L26.4,32.1" stroke="#fff" stroke-width="1" opacity=".8"/><path d="M13.3,32.5 L22.4,36.2 L18.8,44.0 L8.2,40.3Z" fill="#8a9bbb"/><path d="M23.599999999999998,36.7 L20.0,44.5" stroke="#8a9bbb" stroke-width="1" opacity=".8"/><path d="M27,57.7 Q23,57.7 23.5,51.5 Q24.5,45.5 30.5,46 Q32,38 40,35.5 Q49,34 52.5,42 Q60.5,43 60.4,51 Q60,57.7 55,57.7 Z" fill="#8a9bbb"/><path d="M42.1,43.300000000000004 Q42.82,47.38 46.9,48.1 Q42.82,48.82 42.1,52.9 Q41.38,48.82 37.300000000000004,48.1 Q41.38,47.38 42.1,43.300000000000004Z" fill="#fff"/><rect x=".5" y=".5" width="65" height="65" fill="none" stroke="#001650" stroke-width="1" opacity=".8"/></svg><div class="ml">Terraform-Cl<br>oud/EP</div></div>
<div class="mi" style="left:412px;top:415px"><svg width="66" height="66" viewBox="0 0 66 66"><rect width="66" height="66" fill="#00295e"/><rect x="8.6" y="7.7" width="49.2" height="49.6" rx="3" stroke="#8a9bbb" stroke-width="1.3" fill="none"/><path d="M8.6,16 L17,16 M40,16 L57.8,16" stroke="#8a9bbb" stroke-width="1.3"/><circle cx="42.1" cy="11.9" r="1.3" fill="#8a9bbb"/><circle cx="47.2" cy="11.9" r="1.3" fill="#8a9bbb"/><circle cx="52.7" cy="11.9" r="1.3" fill="#8a9bbb"/><path d="M19.7,12.8 L27.9,16.0 L24.7,22.4 L16.0,19.2Z" fill="#fff"/><path d="M29.099999999999998,16.5 L25.9,22.9" stroke="#fff" stroke-width="1" opacity=".8"/><path d="M30.2,16.5 L38.9,19.7 L36.2,26.1 L27.5,22.9Z" fill="#fff"/><path d="M40.1,20.2 L37.400000000000006,26.6" stroke="#fff" stroke-width="1" opacity=".8"/><path d="M41.7,20.1 L51.3,22.9 L48.1,29.8 L38.9,26.6Z" fill="#8a9bbb"/><path d="M52.5,23.4 L49.300000000000004,30.3" stroke="#8a9bbb" stroke-width="1" opacity=".8"/><path d="M24.3,26.1 L33.9,29.3 L30.7,37.5 L21.1,34.3Z" fill="#fff"/><path d="M35.1,29.8 L31.9,38.0" stroke="#fff" stroke-width="1" opacity=".8"/><path d="M19.2,37.1 L29.3,41.7 L25.2,51.7 L14.2,47.2Z" fill="#8a9bbb"/><path d="M30.5,42.2 L26.4,52.2" stroke="#8a9bbb" stroke-width="1" opacity=".8"/><path d="M44.4,36.9 Q45.18,41.32 49.6,42.1 Q45.18,42.88 44.4,47.300000000000004 Q43.62,42.88 39.199999999999996,42.1 Q43.62,41.32 44.4,36.9Z" fill="#fff"/><path d="M38,51.7 L50.8,51.7" stroke="#8a9bbb" stroke-width="1.4"/><rect x=".5" y=".5" width="65" height="65" fill="none" stroke="#001650" stroke-width="1" opacity=".8"/></svg><div class="ml">Terraform-C<br>LI</div></div>
<div class="mi" style="left:495px;top:415px"><svg width="66" height="66" viewBox="0 0 66 66"><rect width="66" height="66" fill="#00295e"/><path d="M23.8,24.3 L15,24.3 A8.45,8.45 0 0 0 15,41.2 L23.8,41.2 Z" stroke="#fff" stroke-width="1.8" fill="none"/><text x="15.8" y="36.6" text-anchor="middle" font-family="Liberation Sans" font-weight="bold" font-size="11.5" fill="#fff">S</text><path d="M23.8,32.5 L39,32.5 M33.4,13.3 L33.4,51.7 M33.4,13.3 L39,13.3 M33.4,51.7 L39,51.7" stroke="#fff" stroke-width="1.8" fill="none"/><path d="M38,10.3 L41.2,13.3 L38,16.3Z" fill="#fff"/><circle cx="50.4" cy="13.3" r="7.6" stroke="#fff" stroke-width="1.6" fill="#00295e"/><circle cx="50.4" cy="13.3" r="5.6" fill="#8a9bbb"/><path d="M50.4,8.700000000000001 Q50.952,12.748000000000001 55.0,13.3 Q50.952,13.852 50.4,17.9 Q49.848,13.852 45.8,13.3 Q49.848,12.748000000000001 50.4,8.700000000000001Z" fill="#00295e"/><path d="M50.4,10.5 Q50.82,12.88 53.199999999999996,13.3 Q50.82,13.72 50.4,16.1 Q49.98,13.72 47.6,13.3 Q49.98,12.88 50.4,10.5Z" fill="#fff"/><path d="M58,13.3 L66,13.3" stroke="#fff" stroke-width="1.8"/><path d="M38,29.5 L41.2,32.5 L38,35.5Z" fill="#fff"/><circle cx="50.4" cy="32.5" r="7.6" stroke="#fff" stroke-width="1.6" fill="#00295e"/><circle cx="50.4" cy="32.5" r="5.6" fill="#8a9bbb"/><path d="M50.4,27.9 Q50.952,31.948 55.0,32.5 Q50.952,33.052 50.4,37.1 Q49.848,33.052 45.8,32.5 Q49.848,31.948 50.4,27.9Z" fill="#00295e"/><path d="M50.4,29.7 Q50.82,32.08 53.199999999999996,32.5 Q50.82,32.92 50.4,35.3 Q49.98,32.92 47.6,32.5 Q49.98,32.08 50.4,29.7Z" fill="#fff"/><path d="M58,32.5 L66,32.5" stroke="#fff" stroke-width="1.8"/><path d="M38,48.7 L41.2,51.7 L38,54.7Z" fill="#fff"/><circle cx="50.4" cy="51.7" r="7.6" stroke="#fff" stroke-width="1.6" fill="#00295e"/><circle cx="50.4" cy="51.7" r="5.6" fill="#8a9bbb"/><path d="M50.4,47.1 Q50.952,51.148 55.0,51.7 Q50.952,52.252 50.4,56.300000000000004 Q49.848,52.252 45.8,51.7 Q49.848,51.148 50.4,47.1Z" fill="#00295e"/><path d="M50.4,48.900000000000006 Q50.82,51.28 53.199999999999996,51.7 Q50.82,52.120000000000005 50.4,54.5 Q49.98,52.120000000000005 47.6,51.7 Q49.98,51.28 50.4,48.900000000000006Z" fill="#fff"/><path d="M58,51.7 L66,51.7" stroke="#fff" stroke-width="1.8"/><rect x=".5" y=".5" width="65" height="65" fill="none" stroke="#001650" stroke-width="1" opacity=".8"/></svg><div class="ml">Conductor</div></div>
<div class="mi" style="left:578px;top:415px"><svg width="66" height="66" viewBox="0 0 66 66"><rect width="66" height="66" fill="#00295e"/><clipPath id="ccl"><rect x="0" y="0" width="66" height="59"/></clipPath><circle cx="33" cy="38.5" r="27.5" fill="#8a9bbb" clip-path="url(#ccl)"/><circle cx="33" cy="38.5" r="23" fill="#00295e" clip-path="url(#ccl)"/><path d="M20.3,47.8 L46,47.8 L48,59 L18,59Z" fill="#8a9bbb"/><path d="M9.6,25 L21,22.4 L19.8,26.6 Q23.5,30 24.5,34.5 L18.5,37.4 Q17.5,32 14.5,29.2 L12.5,31.5 Z" fill="#fff"/><path d="M42,21.5 Q48,23.5 51,26.5 L53,24.2 L55.7,34.6 L44.8,33 L47.5,30.6 Q45,28 40.5,27.5 Z" fill="#fff"/><circle cx="32.8" cy="19.3" r="10.2" fill="#00295e" stroke="#fff" stroke-width="1.8"/><circle cx="32.8" cy="19.3" r="7" stroke="#8a9bbb" stroke-width="2.2" fill="none"/><circle cx="32.8" cy="19.3" r="4" stroke="#fff" stroke-width="1.3" fill="none"/><circle cx="32.8" cy="19.3" r="1.3" fill="#fff"/><circle cx="16.5" cy="47.1" r="10.2" stroke="#fff" stroke-width="1.8" fill="#00295e"/><path d="M13.4,42.6 L17,48 L21.4,46.7 M17,48 L13.7,51.2" stroke="#8a9bbb" stroke-width="1.2" fill="none"/><circle cx="13.4" cy="42.6" r="2.3" fill="#8a9bbb"/><circle cx="21.4" cy="46.7" r="2.3" fill="#8a9bbb"/><circle cx="13.7" cy="51.2" r="2.3" fill="#8a9bbb"/><circle cx="49.1" cy="47.1" r="10.2" stroke="#fff" stroke-width="1.8" fill="#00295e"/><circle cx="49.1" cy="47.1" r="7.8" fill="#8a9bbb"/><path d="M49.1,40.6 Q49.88,46.32 55.6,47.1 Q49.88,47.88 49.1,53.6 Q48.32,47.88 42.6,47.1 Q48.32,46.32 49.1,40.6Z" fill="#00295e"/><path d="M49.1,43.300000000000004 Q49.67,46.53 52.9,47.1 Q49.67,47.67 49.1,50.9 Q48.53,47.67 45.300000000000004,47.1 Q48.53,46.53 49.1,43.300000000000004Z" fill="#fff"/><rect x=".5" y=".5" width="65" height="65" fill="none" stroke="#001650" stroke-width="1" opacity=".8"/></svg><div class="ml">CI/CD for Ia<br>C</div></div>

<div class="red" style="left:569px;top:148px;width:171px;height:111px"></div>
<div class="red" style="left:234px;top:285px;width:91px;height:110px"></div>

<div class="pn" style="left:759px;top:101px;width:172px;height:369px"><div class="ph"><div class="bar"></div><div class="t">Movement登録数</div></div>
 <div class="ca"><svg width="170" height="170"><circle cx="85" cy="84" r="77.5" fill="#fff" filter="url(#sh)"/><path d="M85.00,11.00 A73,73 0 0 1 148.22,120.50 L126.57,108.00 A48,48 0 0 0 85.00,36.00Z" fill="#6c5fe6"/><path d="M148.22,120.50 A73,73 0 1 1 85.00,11.00 L85.00,36.00 A48,48 0 1 0 126.57,108.00Z" fill="#8599d6"/><circle cx="85" cy="84" r="43.5" fill="#f1f1f1"/></svg>
  <div class="ct" style="left:35px;top:58px">Movement</div><div class="cn" style="left:35px;top:68.5px">3</div><div class="ct" style="left:35px;top:100.5px">Total</div>
 </div>
 <div class="mv" style="left:6px;top:208px;width:158px;height:32px;border-top:1px solid #d8d8d8"><span class="sq" style="left:7px;top:11px;background:#6c5fe6"></span><div class="mvx" style="top:7px">Terraform Cloud/E<br>P</div><span class="sep" style="left:128px;top:3px;height:26px"></span><div class="bdg" style="top:9px">1</div></div>
 <div class="mv" style="left:6px;top:241px;width:158px;height:25px"><span class="sq" style="left:7px;top:7px;background:#8599d6"></span><div class="mvx" style="top:8px">Terraform CLI</div><span class="sep" style="left:128px;top:5px;height:14px"></span><div class="bdg" style="top:5px">2</div></div>
</div>
<svg style="position:absolute;left:760px;top:170px" width="170" height="100"><g font-family="Liberation Sans" font-size="12" fill="#fff" stroke-linejoin="round" letter-spacing=".4" style="paint-order:stroke">
<text x="118" y="22" stroke="#6c5fe6" stroke-width="4">33.3 <tspan font-size="10.5">%</tspan></text>
<text x="13" y="82.8" stroke="#8599d6" stroke-width="4">66.7 <tspan font-size="10.5">%</tspan></text></g></svg>
<div class="pn" style="left:939px;top:101px;width:171px;height:369px"><div class="ph"><div class="bar"></div><div class="t">Conductor作業状況</div></div>
 <div class="ca"><svg width="170" height="170"><circle cx="85" cy="84" r="77.5" fill="#fff" filter="url(#sh)"/><circle cx="85" cy="84" r="43" fill="#f1f1f1"/></svg>
  <div class="ct" style="left:35px;top:59px;font-size:10px">作業状況</div><div class="cn" style="left:35px;top:68.5px">0</div><div class="ct" style="left:35px;top:100.5px">Total</div>
 </div>
</div>
<div class="lt" style="left:946px;top:311px;width:156px"><div class="lr"><span class="sq" style="background:#002b62"></span><span class="lx">実行中</span><span class="sep"></span><span class="zr">0</span></div><div class="lr"><span class="sq" style="background:#7b8fad"></span><span class="lx">未実行(予約)</span><span class="sep"></span><span class="zr">0</span></div><div class="lr"><span class="sq" style="background:#ff5a00"></span><span class="lx">一時停止</span><span class="sep"></span><span class="zr">0</span></div><div class="lr"><span class="sq" style="background:#aaaaaa"></span><span class="lx">未実行</span><span class="sep"></span><span class="zr">0</span></div></div>
<div class="pn" style="left:1117px;top:101px;width:172px;height:369px"><div class="ph"><div class="bar"></div><div class="t">Conductor作業結果</div></div>
 <div class="ca"><svg width="170" height="170"><circle cx="85" cy="84" r="77.5" fill="#fff" filter="url(#sh)"/><circle cx="85" cy="84" r="43" fill="#f1f1f1"/></svg>
  <div class="ct" style="left:35px;top:59px;font-size:10px">作業結果</div><div class="cn" style="left:35px;top:68.5px">0</div><div class="ct" style="left:35px;top:100.5px">Total</div>
 </div>
</div>
<div class="lt" style="left:1124px;top:311px;width:157px"><div class="lr"><span class="sq" style="background:#8fd115"></span><span class="lx">正常終了</span><span class="sep"></span><span class="zr">0</span></div><div class="lr"><span class="sq" style="background:#7a2fbf"></span><span class="lx">異常終了</span><span class="sep"></span><span class="zr">0</span></div><div class="lr"><span class="sq" style="background:#ffa800"></span><span class="lx">警告終了</span><span class="sep"></span><span class="zr">0</span></div><div class="lr"><span class="sq" style="background:#ffd800"></span><span class="lx">緊急停止</span><span class="sep"></span><span class="zr">0</span></div><div class="lr"><span class="sq" style="background:#ff6699"></span><span class="lx">予約取消</span><span class="sep"></span><span class="zr">0</span></div><div class="lr"><span class="sq" style="background:#e00000"></span><span class="lx">想定外エラー</span><span class="sep"></span><span class="zr">0</span></div></div>

<div class="pn" style="left:759px;top:476px;width:530px;height:240px;background:#fff"><div class="ph"><div class="bar"></div><div class="t">Conductor作業履歴（2023/05/16～2023/06/12）</div></div></div>
<svg style="position:absolute;left:0;top:0" width="1320" height="721">
 <text x="769" y="531" style="font-size:11px;fill:#333">件数</text>
 <rect x="833" y="523" width="10" height="10" fill="#8fd115"/><text x="851" y="531" style="font-size:11px;fill:#333">正常終了</text>
 <rect x="912" y="523" width="10" height="10" fill="#7a2fbf"/><text x="930" y="531" style="font-size:11px;fill:#333">異常終了</text>
 <rect x="991" y="523" width="10" height="10" fill="#ffa800"/><text x="1009" y="531" style="font-size:11px;fill:#333">警告終了</text>
 <rect x="1070" y="523" width="10" height="10" fill="#ffd800"/><text x="1088" y="531" style="font-size:11px;fill:#333">緊急停止</text>
 <rect x="1149" y="523" width="10" height="10" fill="#ff6699"/><text x="1167" y="531" style="font-size:11px;fill:#333">予約取消</text>
 <rect x="984" y="537" width="10" height="10" fill="#e00000"/><text x="1002" y="545" style="font-size:11px;fill:#333">想定外エラー</text>
 <line x1="810.1" y1="550" x2="810.1" y2="666" stroke="#d4d4d4" stroke-dasharray="2,2"/><line x1="827.1" y1="550" x2="827.1" y2="666" stroke="#d4d4d4" stroke-dasharray="2,2"/><line x1="844.0" y1="550" x2="844.0" y2="666" stroke="#d4d4d4" stroke-dasharray="2,2"/><line x1="861.0" y1="550" x2="861.0" y2="666" stroke="#d4d4d4" stroke-dasharray="2,2"/><line x1="877.9" y1="550" x2="877.9" y2="666" stroke="#d4d4d4" stroke-dasharray="2,2"/><line x1="894.8" y1="550" x2="894.8" y2="666" stroke="#d4d4d4" stroke-dasharray="2,2"/><line x1="911.8" y1="550" x2="911.8" y2="666" stroke="#d4d4d4" stroke-dasharray="2,2"/><line x1="928.7" y1="550" x2="928.7" y2="666" stroke="#d4d4d4" stroke-dasharray="2,2"/><line x1="945.7" y1="550" x2="945.7" y2="666" stroke="#d4d4d4" stroke-dasharray="2,2"/><line x1="962.6" y1="550" x2="962.6" y2="666" stroke="#d4d4d4" stroke-dasharray="2,2"/><line x1="979.5" y1="550" x2="979.5" y2="666" stroke="#d4d4d4" stroke-dasharray="2,2"/><line x1="996.5" y1="550" x2="996.5" y2="666" stroke="#d4d4d4" stroke-dasharray="2,2"/><line x1="1013.4" y1="550" x2="1013.4" y2="666" stroke="#d4d4d4" stroke-dasharray="2,2"/><line x1="1030.4" y1="550" x2="1030.4" y2="666" stroke="#d4d4d4" stroke-dasharray="2,2"/><line x1="1047.3" y1="550" x2="1047.3" y2="666" stroke="#d4d4d4" stroke-dasharray="2,2"/><line x1="1064.2" y1="550" x2="1064.2" y2="666" stroke="#d4d4d4" stroke-dasharray="2,2"/><line x1="1081.2" y1="550" x2="1081.2" y2="666" stroke="#d4d4d4" stroke-dasharray="2,2"/><line x1="1098.1" y1="550" x2="1098.1" y2="666" stroke="#d4d4d4" stroke-dasharray="2,2"/><line x1="1115.1" y1="550" x2="1115.1" y2="666" stroke="#d4d4d4" stroke-dasharray="2,2"/><line x1="1132.0" y1="550" x2="1132.0" y2="666" stroke="#d4d4d4" stroke-dasharray="2,2"/><line x1="1148.9" y1="550" x2="1148.9" y2="666" stroke="#d4d4d4" stroke-dasharray="2,2"/><line x1="1165.9" y1="550" x2="1165.9" y2="666" stroke="#d4d4d4" stroke-dasharray="2,2"/><line x1="1182.8" y1="550" x2="1182.8" y2="666" stroke="#d4d4d4" stroke-dasharray="2,2"/><line x1="1199.8" y1="550" x2="1199.8" y2="666" stroke="#d4d4d4" stroke-dasharray="2,2"/><line x1="1216.7" y1="550" x2="1216.7" y2="666" stroke="#d4d4d4" stroke-dasharray="2,2"/><line x1="1233.6" y1="550" x2="1233.6" y2="666" stroke="#d4d4d4" stroke-dasharray="2,2"/><line x1="1250.6" y1="550" x2="1250.6" y2="666" stroke="#d4d4d4" stroke-dasharray="2,2"/><line x1="1267.5" y1="550" x2="1267.5" y2="666" stroke="#d4d4d4" stroke-dasharray="2,2"/>
 <line x1="793.5" y1="550" x2="793.5" y2="666.5" stroke="#aaa"/>
 <line x1="793" y1="666.5" x2="1267.5" y2="666.5" stroke="#ccc"/>
 <text x="782.5" y="670.5" text-anchor="middle" style="font-size:11px;fill:#333">0</text>
 <g class="chlbl"><text x="801.7" y="679.5" text-anchor="middle">16</text><text x="818.6" y="679.5" text-anchor="middle">17</text><text x="835.6" y="679.5" text-anchor="middle">18</text><text x="852.5" y="679.5" text-anchor="middle">19</text><text x="869.4" y="679.5" text-anchor="middle">20</text><text x="886.4" y="679.5" text-anchor="middle">21</text><text x="903.3" y="679.5" text-anchor="middle">22</text><text x="920.2" y="679.5" text-anchor="middle">23</text><text x="937.2" y="679.5" text-anchor="middle">24</text><text x="954.1" y="679.5" text-anchor="middle">25</text><text x="971.1" y="679.5" text-anchor="middle">26</text><text x="988.0" y="679.5" text-anchor="middle">27</text><text x="1005.0" y="679.5" text-anchor="middle">28</text><text x="1021.9" y="679.5" text-anchor="middle">29</text><text x="1038.8" y="679.5" text-anchor="middle">30</text><text x="1055.8" y="679.5" text-anchor="middle">31</text><text x="1072.7" y="679.5" text-anchor="middle">1</text><text x="1089.7" y="679.5" text-anchor="middle">2</text><text x="1106.6" y="679.5" text-anchor="middle">3</text><text x="1123.5" y="679.5" text-anchor="middle">4</text><text x="1140.5" y="679.5" text-anchor="middle">5</text><text x="1157.4" y="679.5" text-anchor="middle">6</text><text x="1174.4" y="679.5" text-anchor="middle">7</text><text x="1191.3" y="679.5" text-anchor="middle">8</text><text x="1208.2" y="679.5" text-anchor="middle">9</text><text x="1225.2" y="679.5" text-anchor="middle">10</text><text x="1242.1" y="679.5" text-anchor="middle">11</text><text x="1259.1" y="679.5" text-anchor="middle">12</text></g>
 <text x="1030" y="701" text-anchor="middle" style="font-size:11px;fill:#333">日</text>
</svg>

<div id="scr"></div><div id="thumb"></div>
<svg style="position:absolute;left:1301px;top:95px" width="11" height="8" viewBox="0 0 11 8"><path d="M1.5,6 L5.5,2 L9.5,6Z" fill="#999"/></svg>
<svg style="position:absolute;left:1301px;top:704px" width="11" height="8" viewBox="0 0 11 8"><path d="M1.5,2 L5.5,6 L9.5,2Z" fill="#555"/></svg>
</body></html>
